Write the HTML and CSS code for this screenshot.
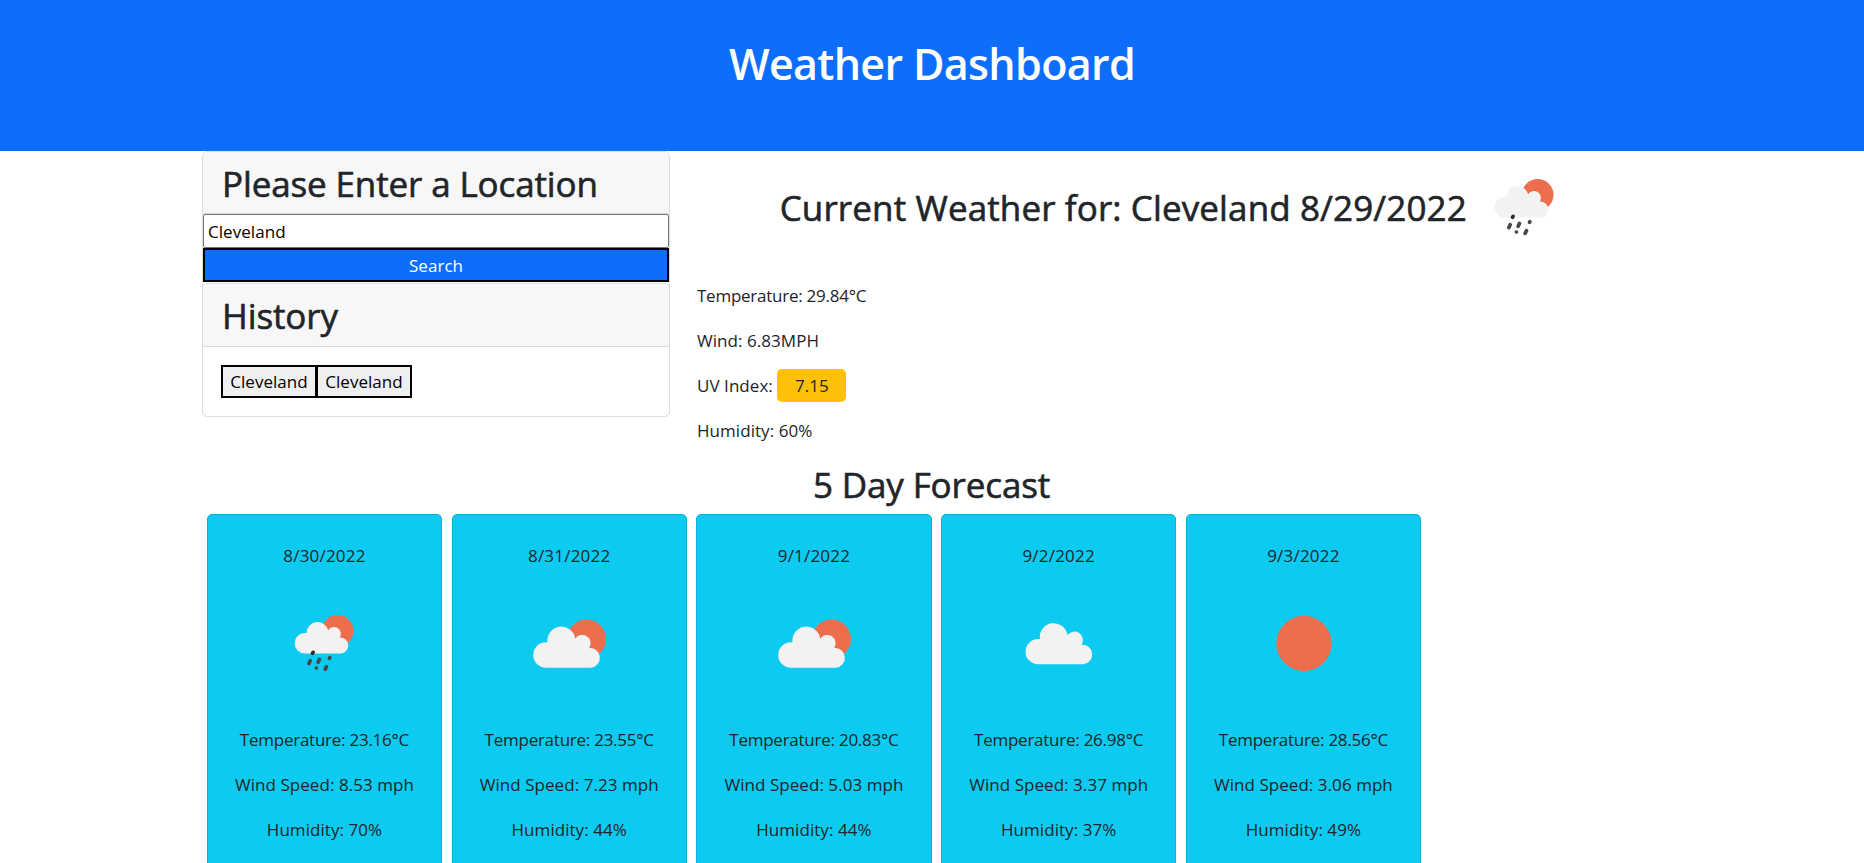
FILE: index.html
```html
<!DOCTYPE html>
<html lang="en">
<head>
<meta charset="utf-8">
<title>Weather Dashboard</title>
<link rel="stylesheet" href="styles.css">
</head>
<body>
<svg class="defs" width="0" height="0" aria-hidden="true">
  <defs>
    <g id="small-cloud">
      <path d="M76 160.500A30.750 30.750 0 0 1 76 99H81A33 33 0 0 1 146 91A20 20 0 0 1 181 112.500A24 24 0 0 1 184 160.500Z" fill="#f2f2f2"/>
    </g>
    <g id="big-cloud">
      <path d="M77 203A38 38 0 0 1 77 127H82A41 41 0 0 1 165 116A25 25 0 0 1 207 144A29.500 29.500 0 0 1 212 203Z" fill="#f2f2f2"/>
    </g>
    <symbol id="rain" viewBox="-34.5 -39 337.5 337.5">
      <circle cx="174.500" cy="92.500" r="47.500" fill="#ec6e4c"/>
      <use href="#small-cloud"/>
      <g stroke="#484848" stroke-width="11" stroke-linecap="round">
        <path d="M99 160L101 157" stroke="#2b2b2b"/>
        <path d="M88 191L92 182M116 187L120 178M150 175L151 173M110.500 204H111M137 208L141 200"/>
      </g>
    </symbol>
    <symbol id="partly" viewBox="-21.6 -39 337.5 337.5">
      <circle cx="199" cy="117" r="58.500" fill="#ec6e4c"/>
      <use href="#big-cloud"/>
    </symbol>
    <symbol id="cloud" viewBox="-31.5 -29 337.5 337.5"><use href="#big-cloud"/></symbol>
    <symbol id="sun" viewBox="0 0 337.5 337.5"><circle cx="171" cy="169.500" r="83" fill="#ec6e4c"/></symbol>
  </defs>
</svg>
<header class="hero"><h1>Weather Dashboard</h1></header>
<main class="container">
  <div class="top">
    <aside class="card search-card">
      <h2 class="card-header">Please Enter a Location</h2>
      <input class="search-input" type="text" value="Cleveland">
      <button class="search-button">Search</button>
      <section class="history">
        <h2 class="card-header">History</h2>
        <div class="history-list"><button>Cleveland</button><button>Cleveland</button></div>
      </section>
    </aside>
    <section class="current">
      <div class="current-title">
        <h2>Current Weather for: Cleveland 8/29/2022</h2>
        <svg class="icon"><use href="#rain"/></svg>
      </div>
      <p class="temp">Temperature: 29.84°C</p>
      <p class="wind">Wind: 6.83MPH</p>
      <p class="uv-line">UV Index: <span class="uv">7.15</span></p>
      <p>Humidity: 60%</p>
    </section>
  </div>
  <h2 class="forecast-title">5 Day Forecast</h2>
  <div class="forecast">
    <article class="day"><p class="date">8/30/2022</p><svg class="icon"><use href="#rain"/></svg><p class="temp">Temperature: 23.16°C</p><p>Wind Speed: 8.53 mph</p><p>Humidity: 70%</p></article>
    <article class="day"><p class="date">8/31/2022</p><svg class="icon"><use href="#partly"/></svg><p class="temp">Temperature: 23.55°C</p><p>Wind Speed: 7.23 mph</p><p>Humidity: 44%</p></article>
    <article class="day"><p class="date">9/1/2022</p><svg class="icon"><use href="#partly"/></svg><p class="temp">Temperature: 20.83°C</p><p>Wind Speed: 5.03 mph</p><p>Humidity: 44%</p></article>
    <article class="day"><p class="date">9/2/2022</p><svg class="icon"><use href="#cloud"/></svg><p class="temp">Temperature: 26.98°C</p><p>Wind Speed: 3.37 mph</p><p>Humidity: 37%</p></article>
    <article class="day"><p class="date">9/3/2022</p><svg class="icon"><use href="#sun"/></svg><p class="temp">Temperature: 28.56°C</p><p>Wind Speed: 3.06 mph</p><p>Humidity: 49%</p></article>
  </div>
</main>
</body>
</html>
```
FILE: styles.css
```css
* { box-sizing: border-box; }
html, body { height: 100%; }
body {
  margin: 0;
  overflow: hidden;
  background: #fff;
  color: #212529;
  font-family: "Open Sans", "Noto Sans", sans-serif;
  font-size: 17px;
  font-weight: 400;
  letter-spacing: 0.05px;
  line-height: 27px;
}
.defs { display: block; height: 0; }
h1, h2, p { margin: 0; white-space: nowrap; }
h1 { font-size: 43px; font-weight: 600; line-height: 54px; letter-spacing: -0.65px; }
h2 { font-size: 35px; font-weight: 400; line-height: 43px; letter-spacing: -0.13px; -webkit-text-stroke: 0.6px currentColor; }
p { margin-bottom: 18px; }
.temp { letter-spacing: -0.25px; }
.date { letter-spacing: 0.2px; }
button, input { font: inherit; letter-spacing: inherit; border-radius: 0; margin: 0; }
.hero {
  height: 151px;
  padding-top: 37px;
  background: #0d6efd;
  color: #fff;
  text-align: center;
}
.container { width: 1485px; height: 712px; overflow: hidden; margin: 0 auto; padding: 0 13.500px 0 12.500px; }
.top { display: grid; grid-template-columns: 468px 1fr; column-gap: 27px; height: 303px; }
.card, .history { border: 1px solid #dfdfdf; border-radius: 5px; }
.search-card { align-self: start; height: 266px; display: flex; flex-direction: column; }
.card-header {
  height: 62px;
  flex: none;
  padding: 10px 19px 0;
  background: #f7f7f7;
  border-bottom: 1px solid #d8d8d8;
  border-radius: 4px 4px 0 0;
}
.search-input { height: 34px; border: 1px solid #767676; border-radius: 2px; padding: 1px 4px; color: #000; }
.search-button { height: 34px; border: 2px solid #000; padding: 0; background: #0d6efd; color: #fff; }
.history { margin: 1px -1px -1px; flex: 1; }
.history .card-header { height: 63px; padding-top: 10px; }
.history-list { display: flex; padding: 18px; }
.history-list button {
  width: 96px;
  height: 33px;
  padding: 0;
  border: 2px solid #000;
  background: #efefef;
  color: #000;
}
.history-list button + button { margin-left: -1px; }
.icon { display: block; width: 112.5px; height: 112.5px; flex: none; }
.current-title {
  display: flex;
  align-items: center;
  justify-content: center;
  height: 112px;
  margin: 0 -2px 19px 0;
}
.current-title h2 { letter-spacing: 0.12px; }
.current-title .icon { margin-left: 1px; }
.uv {
  display: inline-block;
  width: 69px;
  height: 33px;
  margin: -3px 0;
  line-height: 34px;
  text-align: center;
  background: #ffc107;
  border-radius: 5px;
}
.uv-line { height: 27px; line-height: 25px; }
.forecast-title { text-align: center; height: 60px; padding-top: 9px; }
.forecast { display: grid; grid-template-columns: repeat(5, 235.300px); column-gap: 9.450px; padding-left: 4.800px; }
.day {
  height: 400px;
  padding-top: 27px;
  display: flex;
  flex-direction: column;
  align-items: center;
  background: #0dcaf0;
  border: 1px solid #0bb0d2;
  border-radius: 5px;
}
.day .icon { margin-bottom: 26px; }
```
